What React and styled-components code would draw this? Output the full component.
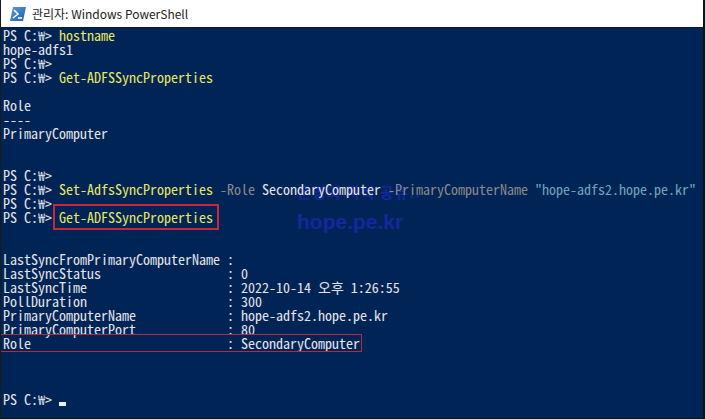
import React from "react";
import styled, { createGlobalStyle } from "styled-components";

const Global = createGlobalStyle`
  html, body { margin: 0; padding: 0; background: #ffffff; }
  #root { width: 705px; height: 419px; overflow: hidden; }
`;

const Window = styled.div`
  position: relative;
  width: 705px;
  height: 419px;
  box-sizing: border-box;
  border-left: 1px solid #1a1a1a;
  border-right: 2px solid #111;
  border-bottom: 1px solid #111;
  display: flex;
  flex-direction: column;
  background: #012456;
  overflow: hidden;
`;

const TitleBar = styled.div`
  height: 28px;
  flex: 0 0 28px;
  background: #ffffff;
  display: flex;
  align-items: center;
  gap: 6px;
  padding-left: 9px;
  box-sizing: border-box;
  font-family: "Noto Sans CJK KR", "Noto Sans", sans-serif;
  font-size: 12px;
  color: #222;
  border-bottom: 1px solid #0b1a3a;
`;

const Console = styled.div`
  position: relative;
  z-index: 1;
  flex: 1;
  padding-left: 2px;
  font-family: "Noto Sans Mono CJK KR", "Liberation Mono", monospace;
  font-size: 14px;
  line-height: 14px;
  color: #e4e4e8;
  white-space: pre;
`;

const Line = styled.div`
  height: 14px;
`;

const Cmd = styled.span`
  color: #e8e860;
`;
const Param = styled.span`
  color: #8a8a8a;
`;
const Str = styled.span`
  color: #6fa5ba;
`;

const Boxed = styled.span`
  display: inline-block;
  height: 14px;
  vertical-align: top;
  outline: 2px solid #c8283c;
  outline-offset: 4px;
`;

const RowBox = styled.span`
  display: inline-block;
  height: 14px;
  vertical-align: top;
  margin-left: -2px;
  padding-left: 2px;
  outline: 1px solid #b02c44;
  outline-offset: 1px;
`;

const Cursor = styled.span`
  display: inline-block;
  width: 7px;
  height: 4px;
  background: #eeedf0;
  vertical-align: -1px;
`;

const Watermark = styled.div`
  position: absolute;
  z-index: 0;
  left: 296px;
  top: 182px;
  display: flex;
  flex-direction: column;
  gap: 8px;
  color: #14289c;
  pointer-events: none;
`;
const WmSmall = styled.div`
  font-family: "Noto Sans CJK KR", sans-serif;
  font-weight: 700;
  font-size: 15px;
  line-height: 20px;
  letter-spacing: 1px;
`;
const WmBig = styled.div`
  font-family: "Liberation Sans", Arial, sans-serif;
  font-weight: 700;
  font-size: 21px;
  line-height: 24px;
`;

function PsIcon() {
  return (
    <svg width="16" height="14" viewBox="0 0 16 14">
      <defs>
        <linearGradient id="psg" x1="0" y1="0" x2="1" y2="1">
          <stop offset="0" stopColor="#5b9bd9" />
          <stop offset="1" stopColor="#1f5fae" />
        </linearGradient>
      </defs>
      <polygon points="3,0 16,0 13,14 0,14" fill="url(#psg)" />
      <polyline points="4,3 8,7 3,11" fill="none" stroke="#fff" strokeWidth="1.6" />
      <line x1="8" y1="11" x2="12" y2="11" stroke="#fff" strokeWidth="1.6" />
    </svg>
  );
}

const P = "PS C:₩> ";

export default function App() {
  return (
    <>
      <Global />
      <Window>
        <TitleBar>
          <PsIcon />
          <span>관리자: Windows PowerShell</span>
        </TitleBar>
        <Watermark>
          <WmSmall>운영의 지식 공유..</WmSmall>
          <WmBig>hope.pe.kr</WmBig>
        </Watermark>
        <Console>
          <Line>{P}<Cmd>hostname</Cmd></Line>
          <Line>hope-adfs1</Line>
          <Line>{P}</Line>
          <Line>{P}<Cmd>Get-ADFSSyncProperties</Cmd></Line>
          <Line />
          <Line>Role</Line>
          <Line>----</Line>
          <Line>PrimaryComputer</Line>
          <Line />
          <Line />
          <Line>{P}</Line>
          <Line>
            {P}<Cmd>Set-AdfsSyncProperties</Cmd> <Param>-Role</Param> SecondaryComputer <Param>-PrimaryComputerName</Param> <Str>"hope-adfs2.hope.pe.kr"</Str>
          </Line>
          <Line>{P}</Line>
          <Line>{P}<Boxed><Cmd>Get-ADFSSyncProperties</Cmd></Boxed></Line>
          <Line />
          <Line />
          <Line>LastSyncFromPrimaryComputerName : </Line>
          <Line>LastSyncStatus                  : 0</Line>
          <Line>LastSyncTime                    : 2022-10-14 오후 1:26:55</Line>
          <Line>PollDuration                    : 300</Line>
          <Line>PrimaryComputerName             : hope-adfs2.hope.pe.kr</Line>
          <Line>PrimaryComputerPort             : 80</Line>
          <Line><RowBox>Role                            : SecondaryComputer</RowBox></Line>
          <Line />
          <Line />
          <Line />
          <Line>{P}<Cursor /></Line>
        </Console>
      </Window>
    </>
  );
}
